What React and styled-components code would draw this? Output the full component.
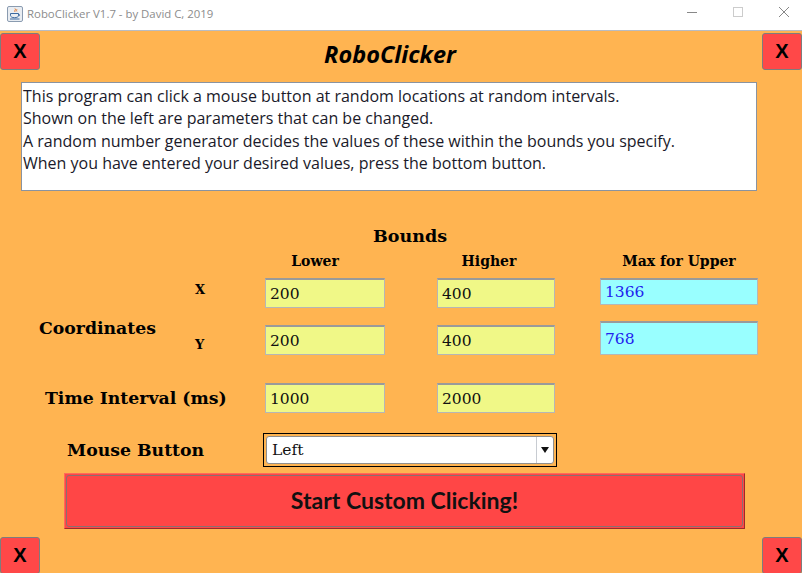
import React from "react";
import styled, { createGlobalStyle } from "styled-components";

const Global = createGlobalStyle`
    html, body { margin: 0; padding: 0; }
    body { width: 802px; height: 573px; overflow: hidden; background: #fff; }
`;

const SLAB = `"DejaVu Serif", "Liberation Serif", serif`;

const App = () => {
    return (
        <Window>
            <Global />
            <TitleBar>
                <TitleLeft>
                    <JavaIcon />
                    <TitleText>RoboClicker V1.7 - by David C, 2019</TitleText>
                </TitleLeft>
                <Controls>
                    <Ctrl>
                        <svg width="12" height="12" viewBox="0 0 12 12"><path d="M1 6.5h10" stroke="#888" strokeWidth="1" /></svg>
                    </Ctrl>
                    <Ctrl>
                        <svg width="12" height="12" viewBox="0 0 12 12"><rect x="1.5" y="1.5" width="9" height="9" fill="none" stroke="#ccc" strokeWidth="1" /></svg>
                    </Ctrl>
                    <Ctrl>
                        <svg width="12" height="12" viewBox="0 0 12 12"><path d="M1 1l10 10M11 1L1 11" stroke="#888" strokeWidth="1" /></svg>
                    </Ctrl>
                </Controls>
            </TitleBar>

            <Frame>
                <CornerRow>
                    <XButton>X</XButton>
                    <AppTitle>RoboClicker</AppTitle>
                    <XButton>X</XButton>
                </CornerRow>

                <InfoBox>
                    <p>This program can click a mouse button at random locations at random intervals.</p>
                    <p>Shown on the left are parameters that can be changed.</p>
                    <p>A random number generator decides the values of these within the bounds you specify.</p>
                    <p>When you have entered your desired values, press the bottom button.</p>
                </InfoBox>

                <Form>
                    <BoundsTitle>Bounds</BoundsTitle>
                    <ColHead $col={3} $shift={-10}>Lower</ColHead>
                    <ColHead $col={5} $shift={-7}>Higher</ColHead>
                    <ColHead $col={7} $shift={0}>Max for Upper</ColHead>

                    <BigLabel $row="3 / span 2" $indent={39} $top={45}>Coordinates</BigLabel>
                    <Axis $row={3} $top={9}>X</Axis>
                    <Field $row={3} $col={3} $top={5}>200</Field>
                    <Field $row={3} $col={5} $top={5}>400</Field>
                    <MaxField $row={3} $top={5} $h={27}>1366</MaxField>

                    <Axis $row={4} $top={19}>Y</Axis>
                    <Field $row={4} $col={3} $top={7}>200</Field>
                    <Field $row={4} $col={5} $top={7}>400</Field>
                    <MaxField $row={4} $top={3} $h={34}>768</MaxField>

                    <BigLabel $row={5} $indent={45} $top={18}>Time Interval (ms)</BigLabel>
                    <Field $row={5} $col={3} $top={13}>1000</Field>
                    <Field $row={5} $col={5} $top={13}>2000</Field>

                    <BigLabel $row={6} $indent={67} $top={20}>Mouse Button</BigLabel>
                    <SelectBox>
                        <SelectInner>
                            <SelectValue>Left</SelectValue>
                            <SelectArrow>
                                <svg width="8" height="6" viewBox="0 0 8 6"><path d="M0 0h8L4 6z" fill="#111" /></svg>
                            </SelectArrow>
                        </SelectInner>
                    </SelectBox>
                </Form>

                <StartButton>
                    <StartInner>Start Custom Clicking!</StartInner>
                </StartButton>

                <CornerRow $bottom>
                    <XButton>X</XButton>
                    <XButton>X</XButton>
                </CornerRow>
            </Frame>
        </Window>
    );
};

const JavaIcon = () => (
    <svg width="16" height="16" viewBox="0 0 16 16">
        <rect x="0.5" y="0.5" width="15" height="15" rx="1.5" fill="#e9edf2" stroke="#8a9bb0" />
        <path d="M8 2.5c1.5 1.2-1.2 2 0 3.4M9.6 3.2c.8.8-.7 1.3.2 2.2" stroke="#e2762a" strokeWidth="1" fill="none" />
        <path d="M3.5 7.5h8v1.8c0 1.5-1.6 2.4-4 2.4s-4-.9-4-2.4z" fill="none" stroke="#3c6aa0" strokeWidth="1" />
        <path d="M11.5 8.2c1.5 0 1.5 1.8 0 1.8" fill="none" stroke="#3c6aa0" strokeWidth="0.9" />
        <path d="M3 13h9.5" stroke="#3c6aa0" strokeWidth="1" />
    </svg>
);

export default App;

const Window = styled.div`
    width: 802px;
    height: 573px;
    display: flex;
    flex-direction: column;
    overflow: hidden;
`;

const TitleBar = styled.div`
    height: 30px;
    flex: none;
    display: flex;
    align-items: center;
    justify-content: space-between;
    background: #fff;
    border-bottom: 1px solid #b9bcc2;
`;

const TitleLeft = styled.div`
    display: flex;
    align-items: center;
    gap: 4px;
    padding-left: 7px;
    margin-top: -3px;
`;

const TitleText = styled.span`
    font-family: "Open Sans", "Noto Sans", sans-serif;
    font-size: 11.4px;
    color: #8c8c8c;
`;

const Controls = styled.div`
    display: flex;
    align-items: center;
    margin-top: -6px;
    margin-right: -5px;
`;

const Ctrl = styled.div`
    width: 46px;
    display: flex;
    justify-content: center;
`;

const Frame = styled.div`
    flex: 1;
    background: #ffb451;
    display: flex;
    flex-direction: column;
`;

const CornerRow = styled.div`
    display: flex;
    justify-content: space-between;
    align-items: center;
    margin-top: ${({ $bottom }) => ($bottom ? "8px" : "2px")};
    height: 37px;
    flex: none;
`;

const XButton = styled.div`
    width: 40px;
    height: 37px;
    box-sizing: border-box;
    background: #ff4848;
    border: 1px solid #7d7d7d;
    border-radius: 3px;
    display: flex;
    align-items: center;
    justify-content: center;
    font-family: "Liberation Sans", Arial, sans-serif;
    font-weight: 700;
    font-size: 20px;
    color: #000;
`;

const AppTitle = styled.h1`
    margin: 5px 0 0 -22px;
    font-family: "Open Sans", "Noto Sans", sans-serif;
    font-style: italic;
    font-weight: 700;
    font-size: 23.5px;
    color: #000;
`;

const InfoBox = styled.div`
    margin: 12px 0 0 21px;
    width: 736px;
    height: 109px;
    box-sizing: border-box;
    background: #fff;
    border: 1px solid #8a93a0;
    padding: 2px 0 0 1px;
    font-family: "Open Sans", "Noto Sans", sans-serif;
    font-size: 16px;
    color: #1a1a2a;
    p {
        margin: 0;
        line-height: 22.4px;
        white-space: nowrap;
    }
`;

const Form = styled.div`
    display: grid;
    grid-template-columns: 190px 75px 120px 52px 118px 45px 158px;
    grid-template-rows: 23px 24px 45px 52px 50px 50px;
    margin-top: 35px;
    font-family: ${SLAB};
`;

const BoundsTitle = styled.div`
    grid-row: 1;
    grid-column: 3 / span 3;
    justify-self: center;
    font-weight: 700;
    font-size: 17.5px;
    color: #000;
`;

const ColHead = styled.div`
    grid-row: 2;
    grid-column: ${({ $col }) => $col};
    justify-self: center;
    align-self: center;
    position: relative;
    left: ${({ $shift }) => $shift}px;
    font-weight: 700;
    font-size: 14px;
    color: #000;
`;

const BigLabel = styled.div`
    grid-row: ${({ $row }) => $row};
    grid-column: 1 / span 2;
    padding-left: ${({ $indent }) => $indent}px;
    padding-top: ${({ $top }) => $top}px;
    font-weight: 700;
    font-size: 17.3px;
    color: #000;
    white-space: nowrap;
`;

const Axis = styled.div`
    grid-row: ${({ $row }) => $row};
    grid-column: 2;
    padding-left: 5px;
    padding-top: ${({ $top }) => $top}px;
    font-weight: 700;
    font-size: 13px;
    color: #000;
`;

const Field = styled.div`
    grid-row: ${({ $row }) => $row};
    grid-column: ${({ $col }) => $col};
    margin-top: ${({ $top }) => $top}px;
    height: 30px;
    box-sizing: border-box;
    background: #f0f887;
    border: 1px solid #b6b6b6;
    border-top: 2px solid #9a9a9a;
    padding-left: 4px;
    display: flex;
    align-items: center;
    font-size: 15.5px;
    color: #111;
`;

const MaxField = styled(Field)`
    grid-column: 7;
    height: ${({ $h }) => $h}px;
    background: #99ffff;
    color: #2222ee;
    padding-left: 4px;
`;

const SelectBox = styled.div`
    grid-row: 6;
    grid-column: 3 / span 3;
    margin: 13px -2px 0 -2px;
    height: 34px;
    box-sizing: border-box;
    border: 1px solid #000;
    padding: 2px;
    background: #ffb451;
`;

const SelectInner = styled.div`
    height: 100%;
    box-sizing: border-box;
    background: #fff;
    border: 1px solid #8f8f8f;
    border-radius: 3px;
    display: flex;
    align-items: stretch;
`;

const SelectValue = styled.div`
    flex: 1;
    display: flex;
    align-items: center;
    padding-left: 5px;
    font-size: 15.5px;
    color: #111;
`;

const SelectArrow = styled.div`
    width: 16px;
    border-left: 1px solid #c8ccd2;
    display: flex;
    align-items: center;
    justify-content: center;
`;

const StartButton = styled.div`
    margin: 3px 0 0 64px;
    width: 681px;
    height: 56px;
    box-sizing: border-box;
    background: #ff4646;
    border: 1px solid #ff6a5a;
    border-right-color: #9e2a2a;
    border-bottom-color: #9e2a2a;
    padding: 1px;
`;

const StartInner = styled.div`
    height: 100%;
    box-sizing: border-box;
    border: 1px solid #8a7070;
    border-radius: 3px;
    display: flex;
    align-items: center;
    justify-content: center;
    padding-bottom: 2px;
    font-family: Lato, "Open Sans", sans-serif;
    font-weight: 700;
    font-size: 23px;
    color: #111;
`;
